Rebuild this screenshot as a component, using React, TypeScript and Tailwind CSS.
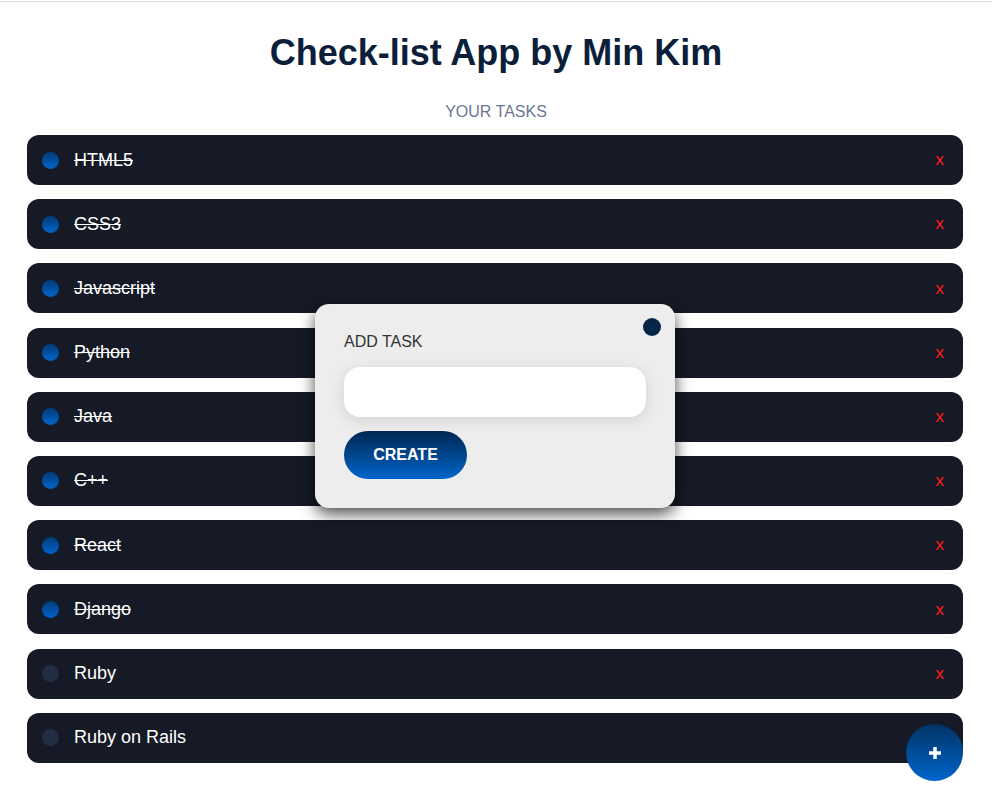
import React from 'react';

const tasks = [
  { name: 'HTML5', done: true },
  { name: 'CSS3', done: true },
  { name: 'Javascript', done: true },
  { name: 'Python', done: true },
  { name: 'Java', done: true },
  { name: 'C++', done: true },
  { name: 'React', done: true },
  { name: 'Django', done: true },
  { name: 'Ruby', done: false },
  { name: 'Ruby on Rails', done: false },
];

export default function App() {
  return (
    <div className="relative min-h-[810px] bg-white font-['Liberation_Sans',Arial,sans-serif]">
      <div className="h-[1px] bg-white" />
      <div className="border-t border-[#dddddd]" />
      <h1 className="mt-[30px] text-center text-[36px] leading-[41px] font-bold text-[#0b1f3b]">
        Check-list App by Min Kim
      </h1>
      <p className="mt-[30px] text-center text-[16px] leading-[18px] text-[#6b7791]">YOUR TASKS</p>

      {/* task list */}
      <ul className="ml-[27px] mr-[29px] mt-[14px] flex flex-col gap-[14.2px]">
        {tasks.map((t) => (
          <li key={t.name} className="flex h-[50px] items-center rounded-[12px] bg-[#151a26] pl-[15px] pr-[19px]">
            <span
              className={`h-[17px] w-[17px] shrink-0 rounded-full ${
                t.done ? 'bg-gradient-to-b from-[#003a78] to-[#0066cc]' : 'bg-[#222c42]'
              }`}
            />
            <span className={`ml-[15px] text-[18px] text-white ${t.done ? 'line-through' : ''}`}>{t.name}</span>
            <span className="ml-auto text-[17px] text-[#ff1a1a]">x</span>
          </li>
        ))}
      </ul>

      {/* add task modal */}
      <div className="absolute left-[315px] top-[304px] h-[204px] w-[360px] rounded-[14px] bg-[#ededed] px-[29px] pt-[29px] shadow-[0_6px_16px_rgba(0,0,0,0.7)]">
        <button className="absolute right-[14px] top-[14px] flex h-[18px] w-[18px] items-center justify-center rounded-full bg-[#062547] text-[11px] leading-none text-[#0e2e52]">
          x
        </button>
        <p className="text-[16px] leading-[18px] text-[#333333]">ADD TASK</p>
        <input className="mt-[16px] h-[50px] w-[302px] rounded-[16px] bg-white shadow-[0_3px_14px_rgba(0,0,0,0.12)] outline-none" />
        <button className="mt-[14px] block h-[48px] w-[123px] rounded-full bg-gradient-to-b from-[#002752] to-[#0066cc] text-[16px] font-bold text-white">
          CREATE
        </button>
      </div>

      {/* floating add button */}
      <button className="absolute left-[906px] top-[724px] flex h-[57px] w-[57px] items-center justify-center rounded-full bg-gradient-to-b from-[#003366] to-[#0066cc]">
        <svg width="14" height="14" viewBox="0 0 14 14">
          <path d="M7 1v12M1 7h12" stroke="#ffffff" strokeWidth="3.5" />
        </svg>
      </button>
    </div>
  );
}
